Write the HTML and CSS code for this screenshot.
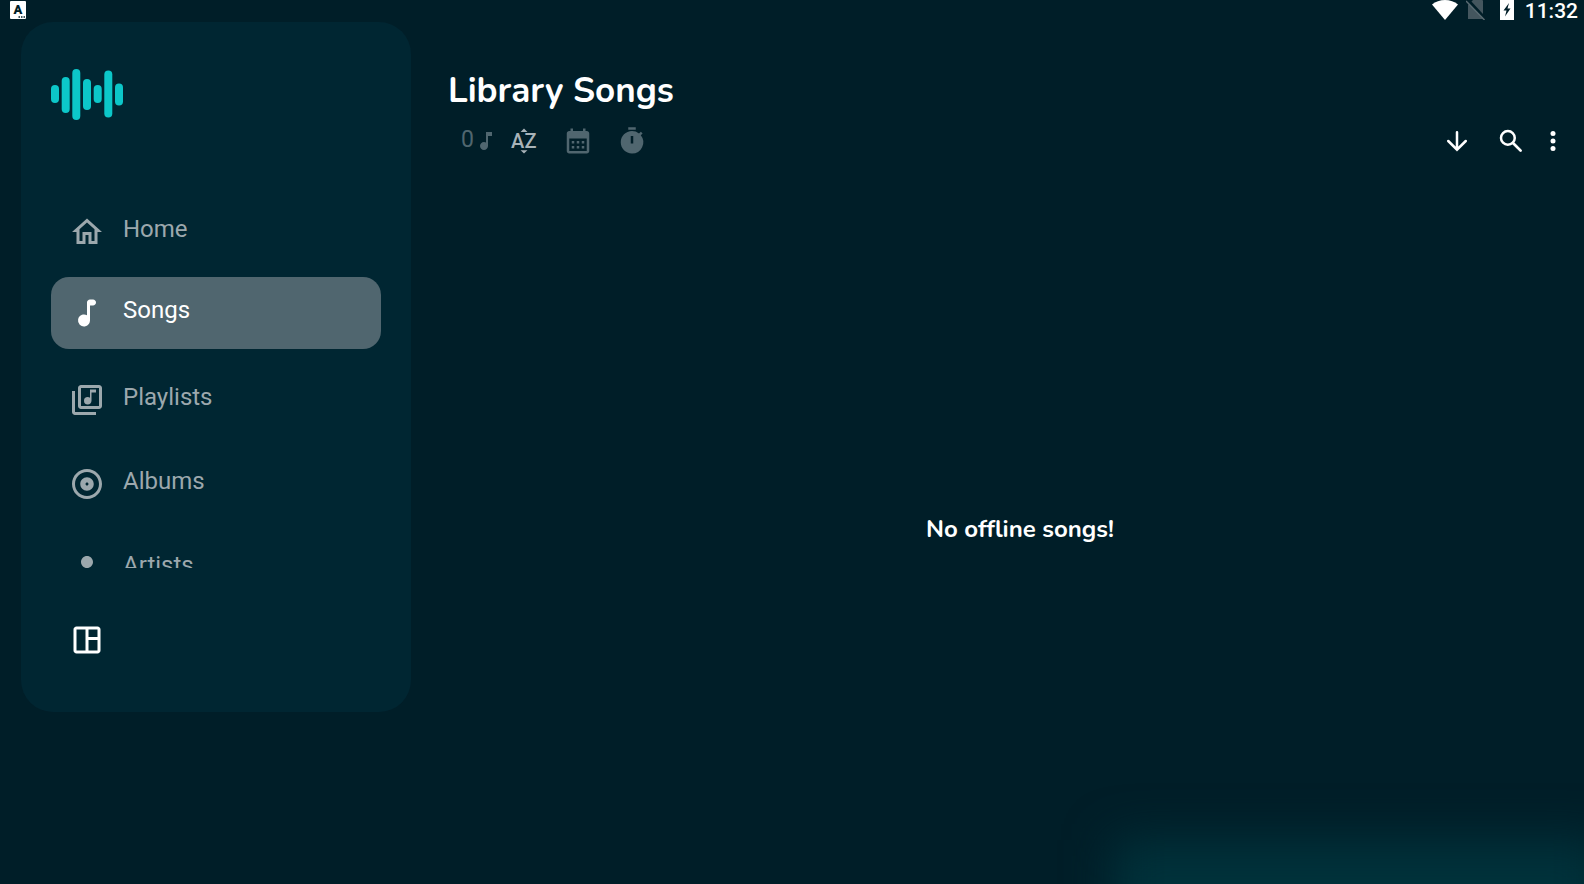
FILE: index.html
```html
<!DOCTYPE html>
<html lang="en">
<head>
    <meta charset="UTF-8">
    <meta name="viewport" content="width=device-width, initial-scale=1.0">
    <title>Library Songs</title>
    <link rel="stylesheet" href="styles.css">
</head>
<body>

<!-- Status Bar -->
<div class="status-bar">
    <svg class="status-app" viewBox="0 0 16 18">
        <rect width="16" height="18" rx="1" fill="#fff"/>
        <text x="8" y="13" text-anchor="middle">A</text>
        <path d="M8.500 16h1.500M11 16h1.500M13.500 16h1.500" stroke="#001e28" stroke-width="1.500"/>
    </svg>
    <div class="status-right">
        <svg class="status-wifi" viewBox="0 0 26 20" fill="#fff"><path d="M0 4.500C3.500 1.500 8 0 13 0s9.500 1.500 13 4.500L13 20z"/></svg>
        <svg class="status-sim" viewBox="0 0 20 20">
            <path d="M2 19V5l5-5h9a1 1 0 0 1 1 1v18z" fill="#44565e"/>
            <path d="M2 0l18 19.500" stroke="#001e28" stroke-width="3"/>
            <path d="M0 1l18.500 19" stroke="#5a6b72" stroke-width="1.500"/>
        </svg>
        <svg class="status-battery" viewBox="0 0 14 20"><path d="M0 0h14v20H0z" fill="#fff"/><path d="M9 3L3.500 10.500h3L5 16.500l5.500-8H7.500z" fill="#001e28"/></svg>
        <span class="status-time">11:32</span>
    </div>
</div>

<div class="container">

    <!-- Sidebar -->
    <aside class="sidebar">
        <div class="logo">
            <svg viewBox="0 0 72 51" fill="#0cc7c9">
                <rect x="0" y="16" width="8" height="18" rx="4"/>
                <rect x="10.700" y="8" width="8" height="36" rx="4"/>
                <rect x="21.300" y="0" width="8" height="51" rx="4"/>
                <rect x="32" y="10" width="8" height="31" rx="4"/>
                <rect x="42.700" y="16" width="8" height="18" rx="4"/>
                <rect x="53.300" y="1.500" width="8" height="47" rx="4"/>
                <rect x="64" y="14.500" width="8" height="22" rx="4"/>
            </svg>
        </div>

        <nav class="nav">
            <button class="nav-item">
                <svg class="icon" viewBox="0 0 24 24"><path d="M12 5.690l5 4.500V18h-2v-6H9v6H7v-7.810l5-4.500M12 3L2 12h3v8h6v-6h2v6h6v-8h3L12 3z"/></svg>
                <span>Home</span>
            </button>
            <button class="nav-item active">
                <svg class="icon" viewBox="0 0 24 24"><path d="M12 5v8.550c-.94-.54-2.100-.75-3.330-.32-1.340.48-2.370 1.670-2.610 3.070a4.007 4.007 0 0 0 4.590 4.650c1.960-.31 3.350-2.110 3.350-4.100V7h2c1.100 0 2-.9 2-2s-.9-2-2-2h-2c-1.100 0-2 .9-2 2z"/></svg>
                <span>Songs</span>
            </button>
            <button class="nav-item">
                <svg class="icon" viewBox="0 0 24 24"><path d="M20 2H8c-1.100 0-2 .9-2 2v12c0 1.100.9 2 2 2h12c1.100 0 2-.9 2-2V4c0-1.100-.9-2-2-2zm0 14H8V4h12v12zm-7.500-1c1.380 0 2.500-1.120 2.500-2.500V7h3V5h-4v5.510c-.42-.32-.93-.51-1.500-.51a2.500 2.500 0 0 0 0 5zM4 6H2v14c0 1.100.9 2 2 2h14v-2H4V6z"/></svg>
                <span>Playlists</span>
            </button>
            <button class="nav-item">
                <svg class="icon" viewBox="0 0 24 24"><path d="M12 2C6.480 2 2 6.480 2 12s4.480 10 10 10 10-4.480 10-10S17.520 2 12 2zm0 18c-4.410 0-8-3.590-8-8s3.590-8 8-8 8 3.590 8 8-3.590 8-8 8zm0-12.500c-2.490 0-4.500 2.010-4.500 4.500s2.010 4.500 4.500 4.500 4.500-2.010 4.500-4.500-2.010-4.500-4.500-4.500zm0 5.500c-.55 0-1-.45-1-1s.45-1 1-1 1 .45 1 1-.45 1-1 1z"/></svg>
                <span>Albums</span>
            </button>
            <button class="nav-item">
                <svg class="icon" viewBox="0 0 24 24"><path d="M12 12c2.210 0 4-1.790 4-4s-1.790-4-4-4-4 1.790-4 4 1.790 4 4 4zm0 2c-2.670 0-8 1.340-8 4v2h16v-2c0-2.660-5.330-4-8-4z"/></svg>
                <span>Artists</span>
            </button>
        </nav>

        <button class="layout-btn" aria-label="Layout">
            <svg class="icon" viewBox="0 0 24 24"><path d="M19 3H5c-1.100 0-2 .9-2 2v14c0 1.100.9 2 2 2h14c1.100 0 2-.9 2-2V5c0-1.100-.9-2-2-2zM5 19V5h6v14H5zm14 0h-6v-7h6v7zm0-9h-6V5h6v5z"/></svg>
        </button>
    </aside>

    <!-- Main Content -->
    <main class="main">
        <h1>Library Songs</h1>

        <div class="toolbar">
            <div class="song-count">
                <span>0</span>
                <svg viewBox="0 0 24 24"><path d="M12 3v10.550c-.59-.34-1.270-.55-2-.55-2.210 0-4 1.790-4 4s1.790 4 4 4 4-1.790 4-4V7h4V3h-6z"/></svg>
            </div>
            <button class="tool-btn selected" aria-label="Sort by name">
                <svg viewBox="0 0 24 24"><path d="M9.250 4.700L12 2l2.750 2.700zM9.250 19.300L12 22l2.750-2.700z"/><text x="1.500" y="17.500">A</text><text x="12.300" y="17.500">Z</text></svg>
            </button>
            <button class="tool-btn" aria-label="Sort by date">
                <svg viewBox="0 0 24 24"><path fill-rule="evenodd" d="M19 4h-1V2h-2v2H8V2H6v2H5c-1.110 0-1.990.9-1.990 2L3 20c0 1.100.89 2 2 2h14c1.100 0 2-.9 2-2V6c0-1.100-.9-2-2-2zm0 16H5V10h14v10z"/><path d="M7 12h2v2H7zm4 0h2v2h-2zm4 0h2v2h-2zm-8 4h2v2H7zm4 0h2v2h-2zm4 0h2v2h-2z"/></svg>
            </button>
            <button class="tool-btn" aria-label="Sort by duration">
                <svg viewBox="0 0 24 24"><path d="M9 1h6v2H9zm10.030 6.390l1.420-1.420c-.43-.51-.9-.99-1.410-1.410l-1.420 1.420A8.962 8.962 0 0 0 12 4c-4.970 0-9 4.030-9 9s4.020 9 9 9a8.994 8.994 0 0 0 7.030-14.610zM13 14h-2V8h2v6z"/></svg>
            </button>

            <div class="actions">
                <button class="tool-btn white" aria-label="Sort direction">
                    <svg viewBox="0 0 24 24"><path d="M12 5v14M5 12l7 7 7-7" fill="none" stroke="currentColor" stroke-width="2" stroke-linecap="round"/></svg>
                </button>
                <button class="tool-btn white" aria-label="Search">
                    <svg viewBox="0 0 24 24"><circle cx="9.500" cy="9.500" r="5.500" fill="none" stroke="currentColor" stroke-width="2"/><path d="M14 14l5.700 5.700" stroke="currentColor" stroke-width="2.200" stroke-linecap="round"/></svg>
                </button>
                <button class="tool-btn white more" aria-label="More options">
                    <svg viewBox="0 0 24 24"><circle cx="12" cy="6" r="2"/><circle cx="12" cy="12" r="2"/><circle cx="12" cy="18" r="2"/></svg>
                </button>
            </div>
        </div>

        <div class="empty">No offline songs!</div>
    </main>
</div>

<div class="backdrop"><div class="glow"></div></div>

</body>
</html>
```

FILE: styles.css
```css
* {
    margin: 0;
    padding: 0;
    box-sizing: border-box;
}

body {
    position: relative;
    display: flex;
    flex-direction: column;
    min-height: 100vh;
    background-color: #001e28;
    color: #fff;
    font-family: Roboto, sans-serif;
}

button {
    border: none;
    background: none;
    color: inherit;
    font: inherit;
    cursor: pointer;
}

svg {
    display: block;
    flex-shrink: 0;
}

/* Status Bar */
.status-bar {
    display: flex;
    justify-content: space-between;
    height: 22px;
    padding: 0 6px 0 10px;
}

.status-app {
    width: 16px;
    height: 18px;
    margin-top: 1px;
}

.status-app text {
    font-size: 13px;
    font-weight: 900;
    fill: #001e28;
}

.status-right {
    display: flex;
}

.status-wifi {
    width: 26px;
    height: 20px;
}

.status-sim {
    width: 20px;
    height: 20px;
    margin-left: 8px;
}

.status-battery {
    width: 14px;
    height: 20px;
    margin-left: 14px;
}

.status-time {
    margin-left: 11px;
    font-size: 21px;
    font-weight: 500;
    line-height: 22px;
}

.container {
    display: flex;
    flex: 1;
}

/* Sidebar */
.sidebar {
    display: flex;
    flex-direction: column;
    align-self: flex-start;
    width: 390px;
    margin-left: 21px;
    padding: 30px;
    background-color: #002632;
    border-radius: 32px;
}

.logo {
    display: flex;
    align-items: center;
    height: 84px;
    margin-bottom: 54px;
}

.logo svg {
    width: 72px;
    height: 51px;
}

.nav {
    display: flex;
    flex-direction: column;
    height: 378px;
    overflow: hidden;
}

.nav-item {
    display: flex;
    flex-shrink: 0;
    align-items: center;
    gap: 18px;
    height: 84px;
    padding: 0 18px;
    color: #9ca8ad;
    font-size: 24px;
    line-height: 28px;
    text-align: left;
}

.nav-item span {
    padding-bottom: 6px;
}

.nav-item.active {
    height: 72px;
    margin: 3px 0 9px;
    background-color: #50666f;
    border-radius: 18px;
    color: #fff;
}

.icon {
    width: 36px;
    height: 36px;
    fill: currentColor;
}

.layout-btn {
    display: flex;
    align-items: center;
    align-self: flex-start;
    height: 84px;
    margin-top: 30px;
    padding: 0 18px;
}

/* Main Content */
.main {
    display: flex;
    flex: 1;
    flex-direction: column;
    padding: 44px 4px 0 37px;
}

h1 {
    padding-top: 2px;
    font-family: Nunito, "Open Sans", sans-serif;
    font-size: 35px;
    font-weight: 700;
    line-height: 46px;
}

.toolbar {
    display: flex;
    align-items: center;
    height: 54px;
    padding-left: 13px;
}

.song-count {
    display: flex;
    align-items: center;
    width: 36px;
    color: #50666f;
    font-size: 23px;
    line-height: 28px;
}

.song-count span {
    padding-bottom: 3px;
}

.song-count svg {
    width: 24px;
    height: 24px;
    fill: currentColor;
}

.tool-btn {
    display: flex;
    align-items: center;
    justify-content: center;
    width: 54px;
    height: 54px;
    color: #50666f;
}

.tool-btn svg {
    width: 30px;
    height: 30px;
    fill: currentColor;
}

.tool-btn text {
    font-size: 16px;
    font-weight: 500;
}

.tool-btn.selected {
    color: #a8b3b8;
}

.tool-btn.white {
    color: #fff;
}

.actions {
    display: flex;
    margin-left: auto;
}

.tool-btn.more {
    width: 30px;
    margin-right: 12px;
}

.empty {
    display: flex;
    flex: 1;
    align-items: center;
    justify-content: center;
    padding: 6px 0 0 12px;
    font-family: Nunito, "Open Sans", sans-serif;
    font-size: 24px;
    font-weight: 700;
}

/* Soft light in the bottom corner */
.backdrop {
    position: absolute;
    inset: 0;
    overflow: hidden;
    pointer-events: none;
}

.glow {
    position: absolute;
    right: -20px;
    bottom: -96px;
    width: 490px;
    height: 140px;
    background-color: #00323b;
    filter: blur(24px);
}
```
